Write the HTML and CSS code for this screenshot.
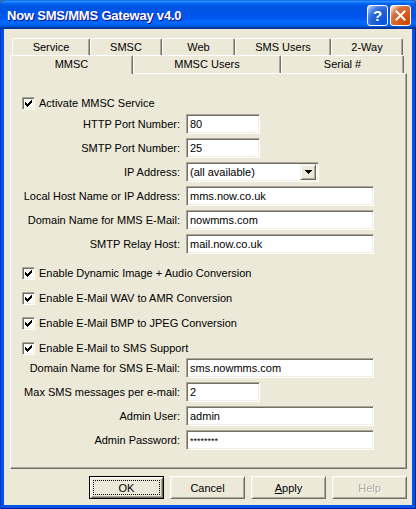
FILE: index.html
```html
<!DOCTYPE html>
<html>
<head>
<meta charset="utf-8">
<link rel="stylesheet" href="styles.css">
</head>
<body>
<div class="window">
  <div class="titlebar">
    <span class="title">Now SMS/MMS Gateway v4.0</span>
    <div class="tb-buttons">
      <span class="tb-btn help">?</span>
      <span class="tb-btn close"><svg width="11" height="11" viewBox="0 0 11 11"><path d="M1.5 1.5L9.5 9.5M9.5 1.5L1.5 9.5" stroke="#fff" stroke-width="2" stroke-linecap="square"/></svg></span>
    </div>
  </div>
  <div class="client">
    <div class="tabrow row1">
      <div class="tab w78">Service</div>
      <div class="tab w72">SMSC</div>
      <div class="tab w73">Web</div>
      <div class="tab w96">SMS Users</div>
      <div class="tab w72">2-Way</div>
    </div>
    <div class="tabrow row2">
      <div class="tab selected w123">MMSC</div>
      <div class="tab w148">MMSC Users</div>
      <div class="tab w123">Serial #</div>
    </div>
    <div class="panel">
      <div class="cbrow first">
        <span class="cb"><svg width="7" height="7" viewBox="0 0 7 7" shape-rendering="crispEdges"><polygon points="0,2 1,2 1,3 2,3 2,4 3,4 3,3 4,3 4,2 5,2 5,1 6,1 6,0 7,0 7,3 6,3 6,4 5,4 5,5 4,5 4,6 3,6 3,7 2,7 2,6 1,6 1,5 0,5"/></svg></span>
        <span>Activate MMSC Service</span>
      </div>
      <div class="field"><span class="lbl">HTTP Port Number:</span><span class="edit short">80</span></div>
      <div class="field"><span class="lbl">SMTP Port Number:</span><span class="edit short">25</span></div>
      <div class="field"><span class="lbl">IP Address:</span><span class="edit combo"><span class="combo-text">(all available)</span><span class="drop"><svg width="7" height="4" viewBox="0 0 7 4" shape-rendering="crispEdges"><polygon points="0,0 7,0 4,4 3,4"/></svg></span></span></div>
      <div class="field"><span class="lbl">Local Host Name or IP Address:</span><span class="edit long">mms.now.co.uk</span></div>
      <div class="field"><span class="lbl">Domain Name for MMS E-Mail:</span><span class="edit long">nowmms.com</span></div>
      <div class="field"><span class="lbl">SMTP Relay Host:</span><span class="edit long">mail.now.co.uk</span></div>

      <div class="cbrow group">
        <span class="cb"><svg width="7" height="7" viewBox="0 0 7 7" shape-rendering="crispEdges"><polygon points="0,2 1,2 1,3 2,3 2,4 3,4 3,3 4,3 4,2 5,2 5,1 6,1 6,0 7,0 7,3 6,3 6,4 5,4 5,5 4,5 4,6 3,6 3,7 2,7 2,6 1,6 1,5 0,5"/></svg></span>
        <span>Enable Dynamic Image + Audio Conversion</span>
      </div>
      <div class="cbrow">
        <span class="cb"><svg width="7" height="7" viewBox="0 0 7 7" shape-rendering="crispEdges"><polygon points="0,2 1,2 1,3 2,3 2,4 3,4 3,3 4,3 4,2 5,2 5,1 6,1 6,0 7,0 7,3 6,3 6,4 5,4 5,5 4,5 4,6 3,6 3,7 2,7 2,6 1,6 1,5 0,5"/></svg></span>
        <span>Enable E-Mail WAV to AMR Conversion</span>
      </div>
      <div class="cbrow">
        <span class="cb"><svg width="7" height="7" viewBox="0 0 7 7" shape-rendering="crispEdges"><polygon points="0,2 1,2 1,3 2,3 2,4 3,4 3,3 4,3 4,2 5,2 5,1 6,1 6,0 7,0 7,3 6,3 6,4 5,4 5,5 4,5 4,6 3,6 3,7 2,7 2,6 1,6 1,5 0,5"/></svg></span>
        <span>Enable E-Mail BMP to JPEG Conversion</span>
      </div>
      <div class="cbrow">
        <span class="cb"><svg width="7" height="7" viewBox="0 0 7 7" shape-rendering="crispEdges"><polygon points="0,2 1,2 1,3 2,3 2,4 3,4 3,3 4,3 4,2 5,2 5,1 6,1 6,0 7,0 7,3 6,3 6,4 5,4 5,5 4,5 4,6 3,6 3,7 2,7 2,6 1,6 1,5 0,5"/></svg></span>
        <span>Enable E-Mail to SMS Support</span>
      </div>

      <div class="field after-cb"><span class="lbl">Domain Name for SMS E-Mail:</span><span class="edit long">sms.nowmms.com</span></div>
      <div class="field"><span class="lbl">Max SMS messages per e-mail:</span><span class="edit short">2</span></div>
      <div class="field"><span class="lbl">Admin User:</span><span class="edit long">admin</span></div>
      <div class="field"><span class="lbl">Admin Password:</span><span class="edit long pw">********</span></div>
    </div>
    <div class="buttons">
      <span class="btn default"><span class="focus">OK</span></span>
      <span class="btn">Cancel</span>
      <span class="btn"><u>A</u>pply</span>
      <span class="btn disabled">Help</span>
    </div>
  </div>
</div>
</body>
</html>
```

FILE: styles.css
```css
html, body {
  margin: 0;
  padding: 0;
  background: #3a6ea5;
}
body {
  font-family: "Liberation Sans", Arial, sans-serif;
  font-size: 11px;
  color: #000;
}
.window {
  width: 416px;
  height: 509px;
  display: flex;
  flex-direction: column;
  background: #0054E3;
  box-shadow: inset 1px 0 #0831D9, inset -1px 0 #001EA0, inset 0 -1px #001EA0;
  border-radius: 6px 6px 0 0;
  overflow: hidden;
}
.titlebar {
  height: 29px;
  flex: none;
  display: flex;
  align-items: center;
  justify-content: space-between;
  padding: 0 5px 0 7px;
  background: linear-gradient(to bottom, #0058EE 0%, #3593FF 4%, #288EFF 6%, #127DFF 8%, #036FFC 10%, #0262EE 14%, #0057E5 20%, #0054E3 24%, #0055EB 56%, #005BF5 66%, #026AFE 76%, #0062EF 86%, #0052D6 92%, #0040AB 94%, #003092 100%);
}
.title {
  color: #fff;
  font-weight: bold;
  font-size: 13px;
  letter-spacing: -0.2px;
  text-shadow: 1px 1px #0F1089;
  padding-top: 1px;
}
.tb-buttons {
  display: flex;
  gap: 2px;
  padding-top: 1px;
}
.tb-btn {
  box-sizing: border-box;
  width: 21px;
  height: 21px;
  border: 1px solid #fff;
  border-radius: 3px;
  display: flex;
  align-items: center;
  justify-content: center;
  color: #fff;
  font-weight: bold;
  font-size: 15px;
}
.tb-btn.help {
  background: radial-gradient(circle at 90% 90%, #0054E9 0%, #2263D5 55%, #4479E4 70%, #A3BBEC 90%, #fff 100%);
}
.tb-btn.close {
  background: radial-gradient(circle at 90% 90%, #CC4600 0%, #DC6527 55%, #CD7546 70%, #FFCCB2 90%, #fff 100%);
}
.client {
  flex: 1;
  margin: 0 4px 4px;
  background: #ECE9D8;
  padding-top: 9px;
  display: flex;
  flex-direction: column;
}
.tabrow {
  display: flex;
  flex: none;
}
.row1 {
  height: 17px;
  margin-left: 8px;
}
.row2 {
  height: 18px;
  margin-left: 6px;
  align-items: flex-start;
}
.tab {
  box-sizing: border-box;
  height: 100%;
  border-top: 1px solid #fff;
  border-left: 1px solid #fff;
  border-right: 1px solid #716F64;
  box-shadow: inset -1px 0 #ACA899;
  border-radius: 2px 2px 0 0;
  text-align: center;
  line-height: 16px;
  background: #ECE9D8;
}
.tab.selected {
  height: 19px;
  position: relative;
  z-index: 1;
}
.w72 { width: 72px; }
.w73 { width: 73px; }
.w78 { width: 78px; }
.w96 { width: 96px; }
.w123 { width: 123px; }
.w148 { width: 148px; }
.panel {
  box-sizing: border-box;
  height: 396px;
  flex: none;
  margin: 0 5px 0 6px;
  border-top: 1px solid #fff;
  border-left: 1px solid #fff;
  border-right: 1px solid #716F64;
  border-bottom: 1px solid #716F64;
  box-shadow: inset -1px -1px #ACA899;
  padding-top: 23px;
  display: flex;
  flex-direction: column;
}
.cbrow {
  height: 13px;
  display: flex;
  align-items: center;
  gap: 4px;
  padding-left: 11px;
  margin-top: 12px;
  line-height: 13px;
  white-space: nowrap;
}
.cbrow.first { margin-top: 0; }
.cbrow.group { margin-top: 13px; }
.cb {
  box-sizing: border-box;
  width: 13px;
  height: 13px;
  flex: none;
  background: #fff;
  border: 1px solid;
  border-color: #ACA899 #fff #fff #ACA899;
  box-shadow: inset 1px 1px #716F64, inset -1px -1px #F1EFE2;
  display: flex;
  align-items: center;
  justify-content: center;
}
.cb svg { display: block; }
.field {
  height: 20px;
  margin-top: 4px;
  display: flex;
  align-items: center;
  white-space: nowrap;
}
.field.after-cb { margin-top: 3px; }
.lbl {
  width: 169px;
  margin-right: 6px;
  text-align: right;
  flex: none;
}
.edit {
  box-sizing: border-box;
  height: 20px;
  background: #fff;
  border: 1px solid;
  border-color: #ACA899 #fff #fff #ACA899;
  box-shadow: inset 1px 1px #716F64, inset -1px -1px #F1EFE2;
  padding: 0 3px;
  line-height: 18px;
  display: flex;
  align-items: center;
}
.edit.short { width: 74px; }
.edit.long { width: 188px; }
.edit.combo {
  width: 133px;
  padding: 2px 2px 2px 3px;
  justify-content: space-between;
}
.edit.pw {
  font-size: 9px;
  align-items: flex-start;
  padding-top: 1px;
}
.combo-text { line-height: 14px; }
.drop {
  box-sizing: border-box;
  width: 16px;
  height: 16px;
  background: #ECE9D8;
  border: 1px solid;
  border-color: #F1EFE2 #716F64 #716F64 #F1EFE2;
  box-shadow: inset 1px 1px #fff, inset -1px -1px #ACA899;
  display: flex;
  align-items: center;
  justify-content: center;
}
.drop svg { display: block; }
.buttons {
  margin-top: 7px;
  height: 23px;
  display: flex;
  justify-content: flex-end;
  gap: 6px;
  padding-right: 5px;
}
.btn {
  box-sizing: border-box;
  width: 75px;
  height: 23px;
  background: #ECE9D8;
  border: 1px solid;
  border-color: #fff #716F64 #716F64 #fff;
  box-shadow: inset 1px 1px #F1EFE2, inset -1px -1px #ACA899;
  display: flex;
  align-items: center;
  justify-content: center;
}
.btn.default {
  border-color: #000;
  box-shadow: inset 1px 1px #fff, inset -1px -1px #716F64, inset 2px 2px #F1EFE2, inset -2px -2px #ACA899;
  padding: 3px;
}
.focus {
  box-sizing: border-box;
  width: 100%;
  height: 100%;
  border: 1px dotted #000;
  display: flex;
  align-items: center;
  justify-content: center;
}
.btn.disabled {
  color: #ACA899;
  text-shadow: 1px 1px #fff;
}
```
